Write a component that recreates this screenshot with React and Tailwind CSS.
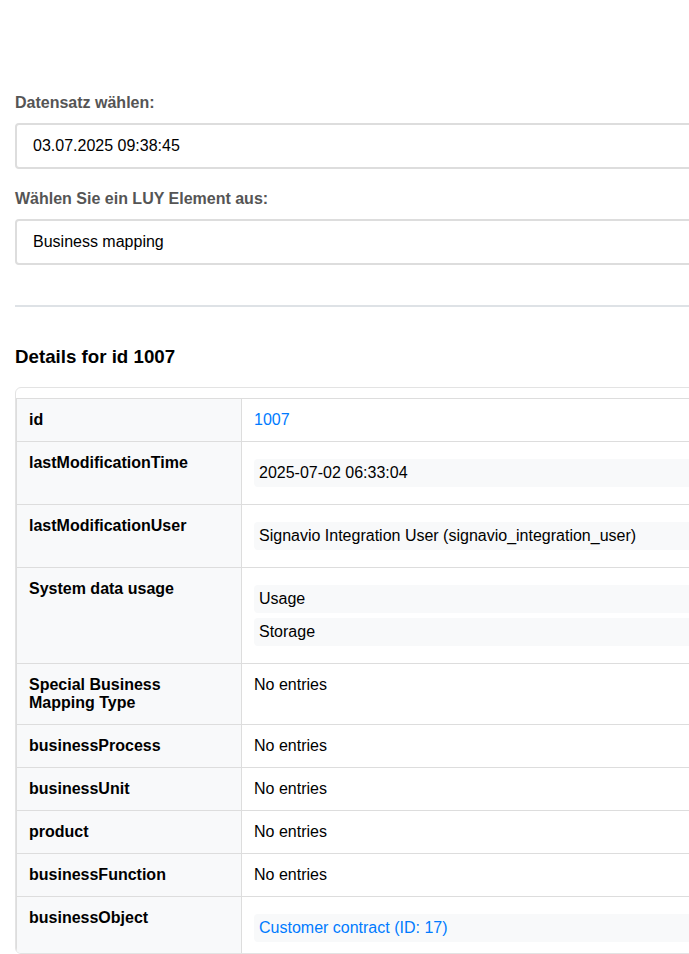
const rows = [
  { label: 'id', kind: 'link', values: ['1007'] },
  { label: 'lastModificationTime', kind: 'pill', values: ['2025-07-02 06:33:04'] },
  { label: 'lastModificationUser', kind: 'pill', values: ['Signavio Integration User (signavio_integration_user)'] },
  { label: 'System data usage', kind: 'pill', values: ['Usage', 'Storage'] },
  { label: 'Special Business Mapping Type', kind: 'empty' },
  { label: 'businessProcess', kind: 'empty' },
  { label: 'businessUnit', kind: 'empty' },
  { label: 'product', kind: 'empty' },
  { label: 'businessFunction', kind: 'empty' },
  { label: 'businessObject', kind: 'pill-link', values: ['Customer contract (ID: 17)'] },
]

function Value({ row }) {
  if (row.kind === 'empty') return <span>No entries</span>
  if (row.kind === 'link') return <a href="#" className="text-[#007bff]">{row.values[0]}</a>
  return row.values.map((v) => (
    <div key={v} className={`my-[5px] rounded bg-[#f8f9fa] px-[5px] py-[5px] ${row.kind === 'pill-link' ? 'text-[#007bff]' : ''}`}>
      {v}
    </div>
  ))
}

export default function App() {
  return (
    <div className="h-[954px] w-full overflow-hidden bg-white text-[16px] leading-[18px] text-black" style={{ fontFamily: '"Liberation Sans", Arial, sans-serif' }}>
      <div className="w-[1000px] px-[15px] pt-[94px]">
        <label className="mb-[11px] block font-bold text-[#555]">Datensatz wählen:</label>
        <div className="rounded border-2 border-[#dddddd] px-4 py-3">03.07.2025 09:38:45</div>

        <label className="mb-[11px] mt-[21px] block font-bold text-[#555]">Wählen Sie ein LUY Element aus:</label>
        <div className="rounded border-2 border-[#dddddd] px-4 py-3">Business mapping</div>

        <hr className="mt-[40px] border-t-2 border-[#dee2e6]" />

        <h3 className="mt-[39px] text-[18.72px] font-bold leading-[21px]">Details for id 1007</h3>

        <div className="mt-[20px] h-[567px] overflow-hidden rounded-md border border-[#e3e3e3] pt-[10px]">
          <table className="w-full border-collapse">
            <tbody>
              {rows.map((row) => (
                <tr key={row.label}>
                  <th className="w-[225px] border border-[#dddddd] bg-[#f8f9fa] px-3 py-3 text-left align-top font-bold">
                    {row.label}
                  </th>
                  <td className="border border-[#dddddd] px-3 py-3 align-top">
                    <Value row={row} />
                  </td>
                </tr>
              ))}
            </tbody>
          </table>
        </div>
      </div>
    </div>
  )
}
